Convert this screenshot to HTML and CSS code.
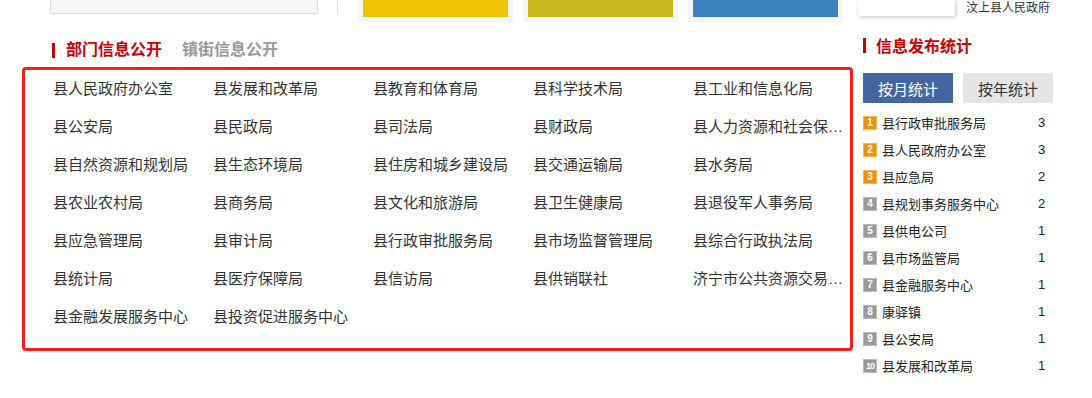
FILE: index.html
```
<!DOCTYPE html>
<html lang="zh-CN">
<head>
    <meta charset="UTF-8">
    <title>部门信息公开</title>
    <link rel="stylesheet" href="styles.css">
</head>
<body>
    <div class="topstrip">
        <div class="searchbox"></div>
        <div class="divider"></div>
        <div class="tiles">
            <div class="tile"><div class="tile-in yellow"></div></div>
            <div class="tile"><div class="tile-in olive"></div></div>
            <div class="tile"><div class="tile-in blue"></div></div>
        </div>
        <div class="logobox"></div>
        <div class="govname">汶上县人民政府</div>
    </div>

    <div class="main">
        <div class="left">
            <div class="tabs">
                <span class="bar"></span>
                <span class="tab active">部门信息公开</span>
                <span class="tab">镇街信息公开</span>
            </div>
            <div class="deptbox">
                <a class="dept">县人民政府办公室</a>
                <a class="dept">县发展和改革局</a>
                <a class="dept">县教育和体育局</a>
                <a class="dept">县科学技术局</a>
                <a class="dept">县工业和信息化局</a>
                <a class="dept">县公安局</a>
                <a class="dept">县民政局</a>
                <a class="dept">县司法局</a>
                <a class="dept">县财政局</a>
                <a class="dept">县人力资源和社会保障局</a>
                <a class="dept">县自然资源和规划局</a>
                <a class="dept">县生态环境局</a>
                <a class="dept">县住房和城乡建设局</a>
                <a class="dept">县交通运输局</a>
                <a class="dept">县水务局</a>
                <a class="dept">县农业农村局</a>
                <a class="dept">县商务局</a>
                <a class="dept">县文化和旅游局</a>
                <a class="dept">县卫生健康局</a>
                <a class="dept">县退役军人事务局</a>
                <a class="dept">县应急管理局</a>
                <a class="dept">县审计局</a>
                <a class="dept">县行政审批服务局</a>
                <a class="dept">县市场监督管理局</a>
                <a class="dept">县综合行政执法局</a>
                <a class="dept">县统计局</a>
                <a class="dept">县医疗保障局</a>
                <a class="dept">县信访局</a>
                <a class="dept">县供销联社</a>
                <a class="dept">济宁市公共资源交易中心汶上分中心</a>
                <a class="dept">县金融发展服务中心</a>
                <a class="dept">县投资促进服务中心</a>
            </div>
        </div>

        <div class="right">
            <div class="stat-title">
                <span class="bar"></span>
                <span>信息发布统计</span>
            </div>
            <div class="stat-btns">
                <button class="sbtn on">按月统计</button>
                <button class="sbtn">按年统计</button>
            </div>
            <ul class="rank">
                <li><span class="no hot">1</span><span class="name">县行政审批服务局</span><span class="cnt">3</span></li>
                <li><span class="no hot">2</span><span class="name">县人民政府办公室</span><span class="cnt">3</span></li>
                <li><span class="no hot">3</span><span class="name">县应急局</span><span class="cnt">2</span></li>
                <li><span class="no">4</span><span class="name">县规划事务服务中心</span><span class="cnt">2</span></li>
                <li><span class="no">5</span><span class="name">县供电公司</span><span class="cnt">1</span></li>
                <li><span class="no">6</span><span class="name">县市场监管局</span><span class="cnt">1</span></li>
                <li><span class="no">7</span><span class="name">县金融服务中心</span><span class="cnt">1</span></li>
                <li><span class="no">8</span><span class="name">康驿镇</span><span class="cnt">1</span></li>
                <li><span class="no">9</span><span class="name">县公安局</span><span class="cnt">1</span></li>
                <li><span class="no ten">10</span><span class="name">县发展和改革局</span><span class="cnt">1</span></li>
            </ul>
        </div>
    </div>
</body>
</html>
```

FILE: styles.css
```
body {
    margin: 0;
    background: #fff;
    font-family: "Liberation Sans", "Noto Sans CJK SC", sans-serif;
    color: #333;
}

/* cut off strip from the section above */
.topstrip {
    display: flex;
    align-items: flex-start;
    height: 23px;
}
.searchbox {
    margin-left: 50px;
    width: 266px;
    height: 13px;
    background: #f5f5f5;
    border: 1px solid #ddd;
    border-top: none;
}
.divider {
    margin-left: 19px;
    width: 1px;
    height: 14px;
    background: #e0e0e0;
}
.tiles {
    display: flex;
    gap: 10px;
    margin-left: 20px;
}
.tile {
    width: 145px;
    padding: 0 5px 5px;
    background: #f5f5f5;
}
.tile-in {
    height: 17px;
}
.yellow { background: #efc400; }
.olive { background: #c8b81e; }
.blue { background: #3a82bf; }
.logobox {
    margin-left: 15px;
    width: 97px;
    height: 16px;
    background: #fff;
    box-shadow: 1px 1px 4px rgba(0,0,0,0.25);
}
.govname {
    margin-left: 11px;
    margin-top: 1px;
    font-size: 12px;
    line-height: 14px;
    color: #333;
}

.main {
    display: flex;
    align-items: flex-start;
}
.left {
    margin-left: 22px;
    width: 831px;
}
.bar {
    display: inline-block;
    width: 3px;
    height: 15px;
    background: #c00;
}
.tabs {
    display: flex;
    align-items: center;
    height: 16px;
    margin-top: 19px;
    padding-left: 30px;
}
.tab {
    font-size: 16px;
    font-weight: bold;
    line-height: 16px;
    color: #999;
    margin-left: 20px;
}
.tab.active {
    color: #c00;
    margin-left: 11px;
}
.deptbox {
    margin-top: 9px;
    border: 3px solid #f3201a;
    border-radius: 4px;
    padding: 0 0 12px 28px;
    display: grid;
    grid-template-columns: repeat(5, 160px);
}
.dept {
    width: 153px;
    font-size: 15px;
    line-height: 38px;
    height: 38px;
    color: #333;
    white-space: nowrap;
    overflow: hidden;
    text-overflow: ellipsis;
    cursor: pointer;
}

.right {
    margin-left: 10px;
    width: 190px;
}
.stat-title {
    display: flex;
    align-items: center;
    height: 16px;
    margin-top: 14px;
    font-size: 16px;
    font-weight: bold;
    color: #c00;
}
.stat-title .bar {
    margin-right: 10px;
}
.stat-btns {
    display: flex;
    gap: 10px;
    margin-top: 20px;
}
.sbtn {
    width: 90px;
    height: 30px;
    border: none;
    padding: 0;
    font-family: inherit;
    font-size: 15px;
    background: #e5e5e5;
    color: #333;
    cursor: pointer;
}
.sbtn.on {
    background: #4366a2;
    color: #fff;
}
.rank {
    list-style: none;
    margin: 6px 0 0;
    padding: 0;
}
.rank li {
    display: flex;
    align-items: center;
    height: 27px;
    font-size: 13px;
}
.no {
    display: flex;
    align-items: center;
    justify-content: center;
    width: 12px;
    height: 12px;
    overflow: hidden;
    font-size: 10px;
    font-weight: bold;
    color: #fff;
    background: #9a9a9a;
    border: 1px solid #bbb;
    margin-right: 5px;
}
.no.hot {
    background: #f0900f;
    border-color: #f7b556;
}
.no.ten {
    font-size: 9px;
    letter-spacing: -1px;
}
.name {
    flex: 1;
    color: #222;
}
.cnt {
    width: 15px;
    color: #222;
}
```
